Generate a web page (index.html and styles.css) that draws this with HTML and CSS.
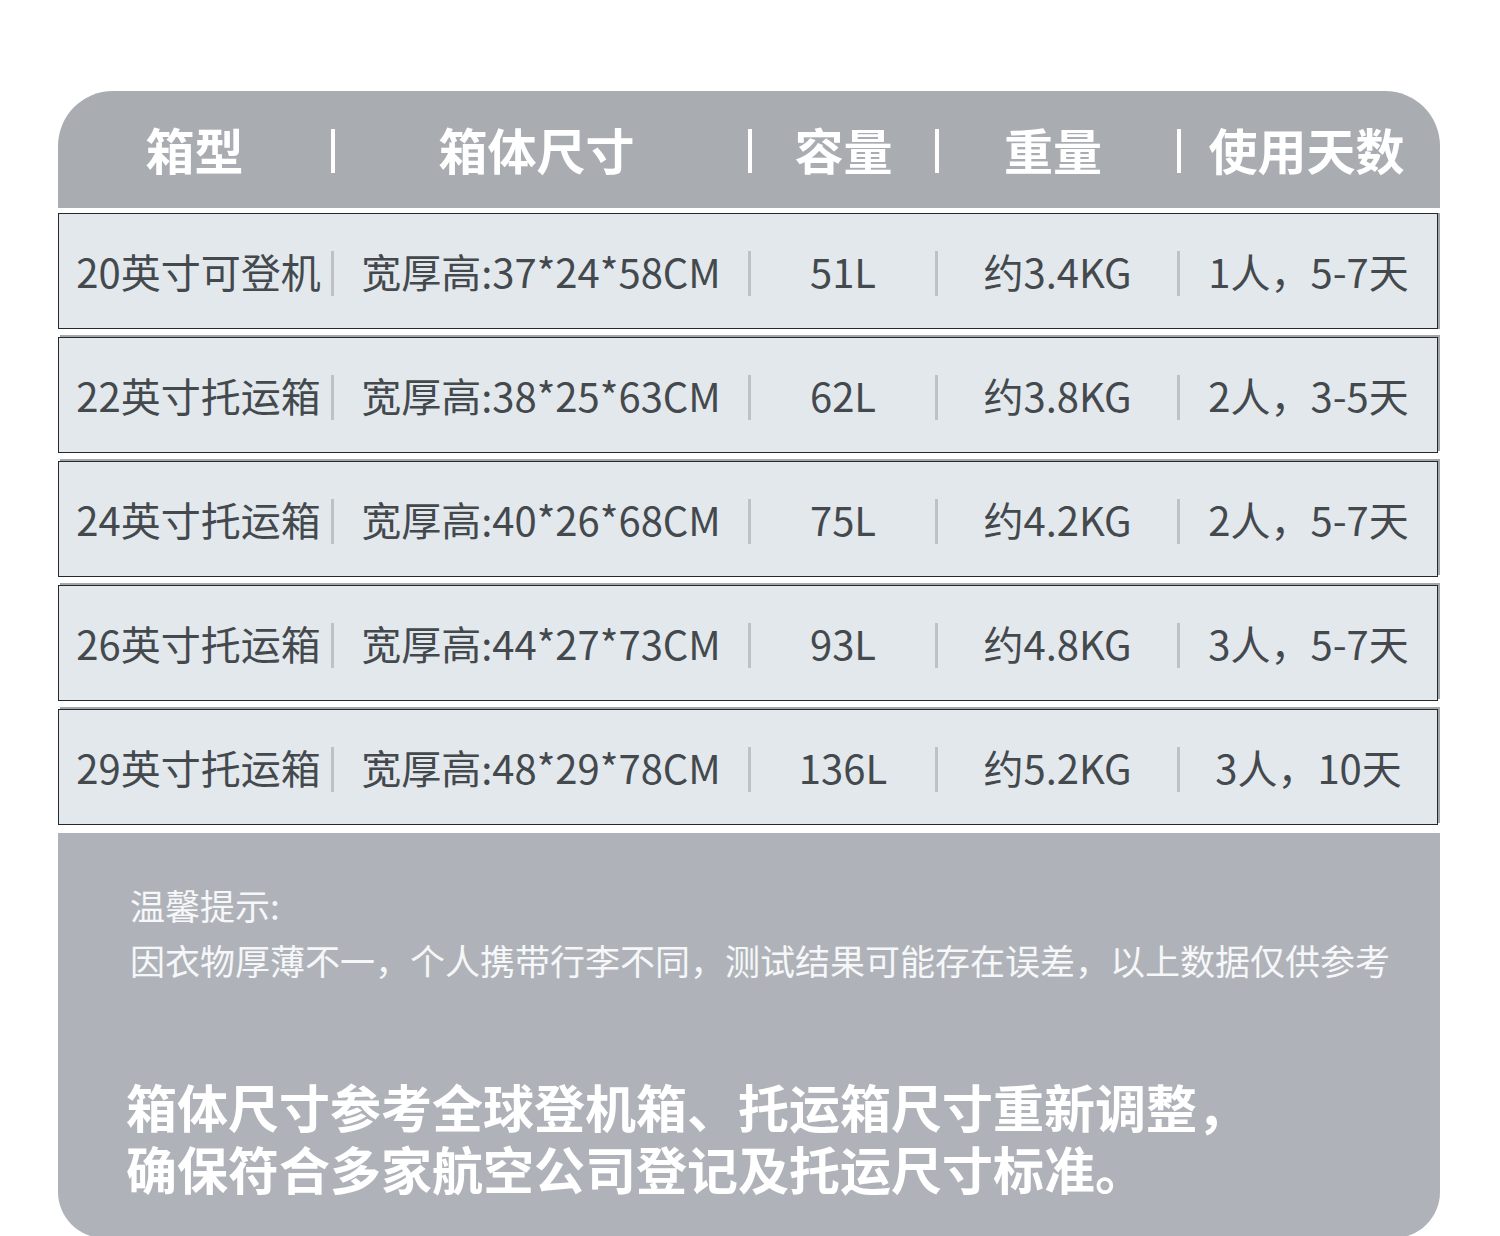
FILE: index.html
```html
<!DOCTYPE html>
<html lang="zh-CN">
<head>
<meta charset="utf-8">
<title>箱体尺寸</title>
<link rel="stylesheet" href="styles.css">
</head>
<body>
<div class="page">
  <div class="card">
    <div class="head grid">
      <div class="cell">箱型</div><div class="sep"></div>
      <div class="cell">箱体尺寸</div><div class="sep"></div>
      <div class="cell">容量</div><div class="sep"></div>
      <div class="cell">重量</div><div class="sep"></div>
      <div class="cell">使用天数</div>
    </div>
    <div class="rows">
      <div class="row grid">
        <div class="cell">20英寸可登机</div><div class="sep"></div>
        <div class="cell">宽厚高:37*24*58CM</div><div class="sep"></div>
        <div class="cell">51L</div><div class="sep"></div>
        <div class="cell">约3.4KG</div><div class="sep"></div>
        <div class="cell">1人，5-7天</div>
      </div>
      <div class="row grid">
        <div class="cell">22英寸托运箱</div><div class="sep"></div>
        <div class="cell">宽厚高:38*25*63CM</div><div class="sep"></div>
        <div class="cell">62L</div><div class="sep"></div>
        <div class="cell">约3.8KG</div><div class="sep"></div>
        <div class="cell">2人，3-5天</div>
      </div>
      <div class="row grid">
        <div class="cell">24英寸托运箱</div><div class="sep"></div>
        <div class="cell">宽厚高:40*26*68CM</div><div class="sep"></div>
        <div class="cell">75L</div><div class="sep"></div>
        <div class="cell">约4.2KG</div><div class="sep"></div>
        <div class="cell">2人，5-7天</div>
      </div>
      <div class="row grid">
        <div class="cell">26英寸托运箱</div><div class="sep"></div>
        <div class="cell">宽厚高:44*27*73CM</div><div class="sep"></div>
        <div class="cell">93L</div><div class="sep"></div>
        <div class="cell">约4.8KG</div><div class="sep"></div>
        <div class="cell">3人，5-7天</div>
      </div>
      <div class="row grid">
        <div class="cell">29英寸托运箱</div><div class="sep"></div>
        <div class="cell">宽厚高:48*29*78CM</div><div class="sep"></div>
        <div class="cell">136L</div><div class="sep"></div>
        <div class="cell">约5.2KG</div><div class="sep"></div>
        <div class="cell">3人，10天</div>
      </div>
    </div>
    <div class="foot">
      <p class="tip">温馨提示:<br>因衣物厚薄不一，个人携带行李不同，测试结果可能存在误差，以上数据仅供参考</p>
      <div class="note">
        <p class="note-line">箱体尺寸参考全球登机箱、托运箱尺寸重新调整，</p>
        <p class="note-line">确保符合多家航空公司登记及托运尺寸标准。</p>
      </div>
    </div>
  </div>
</div>
</body>
</html>
```

FILE: styles.css
```css
html, body {
  margin: 0;
  padding: 0;
  background: #ffffff;
}
body {
  font-family: "Noto Sans CJK SC", "Noto Sans", sans-serif;
}
.page {
  padding: 91px 0 0 58px;
  height: 1145px;
  overflow: hidden;
}
.card {
  width: 1382px;
}
.grid {
  display: grid;
  align-items: center;
}
.head {
  height: 117px;
  background: #a9adb2;
  border-radius: 55px 55px 0 0;
  grid-template-columns: 273px 4px 413px 4px 183px 4px 238px 4px 261px;
  color: #ffffff;
  font-weight: 700;
  font-size: 49px;
}
.head .cell {
  margin-top: -3px;
}
.head .cell:nth-child(3),
.head .cell:nth-child(7),
.head .cell:nth-child(9) {
  padding-right: 10px;
}
.head .sep {
  height: 44px;
  background: #ffffff;
  margin-top: 2px;
}
.cell {
  text-align: center;
  white-space: nowrap;
}
.rows {
  display: flex;
  flex-direction: column;
  gap: 8px;
  margin-top: 5px;
}
.row {
  box-sizing: border-box;
  width: 1380px;
  height: 116px;
  border: 1px solid #26282b;
  background: #e3e8ec;
  box-shadow: 2px -2px 0 #a3a6ab;
  grid-template-columns: 272px 3px 414px 3px 184px 3px 239px 3px 257px;
  color: #44494e;
  font-size: 40px;
}
.row:first-child {
  box-shadow: 2px 0 0 #a3a6ab;
}
.row .cell:first-child {
  padding-left: 7px;
}
.row .sep {
  height: 45px;
  background: #bec2c6;
  margin-top: 4px;
}
.foot {
  margin-top: 8px;
  height: 405px;
  background: #afb3b9;
  border-radius: 0 0 46px 46px;
  box-sizing: border-box;
  padding: 44px 0 0 72px;
  color: #f6f7f8;
}
.tip {
  margin: 0;
  font-size: 35px;
  line-height: 55px;
}
.note {
  margin: 88px 0 0 -4px;
  font-size: 51px;
  font-weight: 700;
  color: #ffffff;
}
.note-line {
  margin: 0;
  height: 62px;
  line-height: 62px;
}
```
